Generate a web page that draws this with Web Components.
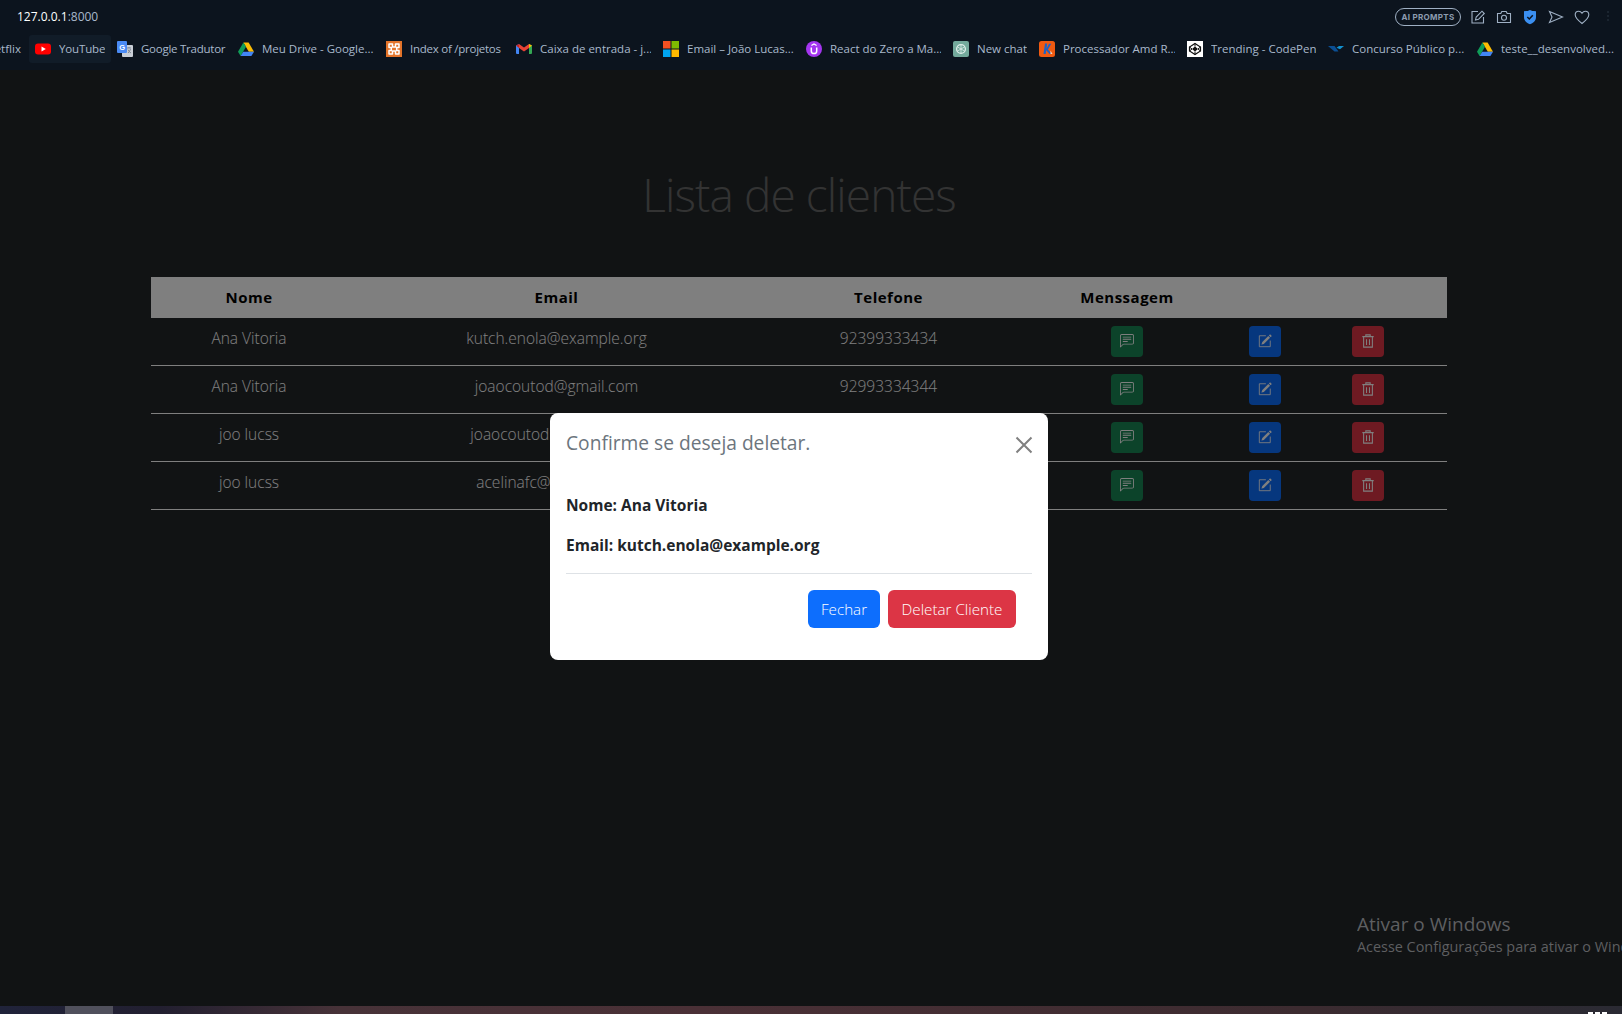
<!DOCTYPE html>
<html lang="pt-BR">
<head>
<meta charset="utf-8">
<title>Lista de clientes</title>
<style>
    html, body { margin: 0; height: 100%; background: #232629; overflow: hidden; }
    body { font-family: "Open Sans", "Noto Sans", sans-serif; }
</style>
</head>
<body>
<app-shell>
    <browser-bar slot="bar" address="127.0.0.1" port=":8000">
        <bookmark-link icon="none" w="37" label="Netflix"></bookmark-link>
        <bookmark-link icon="youtube" w="46" ls="-.15" label="YouTube" active></bookmark-link>
        <bookmark-link icon="translate" w="85" ls="-.25" label="Google Tradutor"></bookmark-link>
        <bookmark-link icon="drive" w="112" label="Meu Drive - Google..."></bookmark-link>
        <bookmark-link icon="xampp" w="94" ls="-.25" label="Index of /projetos"></bookmark-link>
        <bookmark-link icon="gmail" w="111" label="Caixa de entrada - j..."></bookmark-link>
        <bookmark-link icon="microsoft" w="107" label="Email – João Lucas..."></bookmark-link>
        <bookmark-link icon="udemy" w="111" label="React do Zero a Ma..."></bookmark-link>
        <bookmark-link icon="chatgpt" w="50" label="New chat"></bookmark-link>
        <bookmark-link icon="kabum" w="112" label="Processador Amd R..."></bookmark-link>
        <bookmark-link icon="codepen" w="105" label="Trending - CodePen"></bookmark-link>
        <bookmark-link icon="concurso" w="113" label="Concurso Público p..."></bookmark-link>
        <bookmark-link icon="drive" w="113" label="teste__desenvolved..."></bookmark-link>
    </browser-bar>

    <client-list heading="Lista de clientes">
        <client-row name="Ana Vitoria" email="kutch.enola@example.org" phone="92399333434"></client-row>
        <client-row name="Ana Vitoria" email="joaocoutod@gmail.com" phone="92993334344"></client-row>
        <client-row name="joo lucss" email="joaocoutod1@gmail.com" phone="92993334344"></client-row>
        <client-row name="joo lucss" email="acelinafc@hotmail.com" phone="92993334344"></client-row>
    </client-list>

    <confirm-modal heading="Confirme se deseja deletar.">
        <p>Nome: Ana Vitoria</p>
        <p>Email: kutch.enola@example.org</p>
    </confirm-modal>

    <activation-note></activation-note>
    <task-strip slot="strip"></task-strip>
</app-shell>

<script>
// favicons for the bookmarks row, all 16x16
const FAVICONS = {
    none: '',
    youtube: '<rect x="0" y="2.5" width="16" height="11" rx="3" fill="#f00"/><path d="M6.5 5.6 10.8 8l-4.3 2.4z" fill="#fff"/>',
    translate: '<rect x="5" y="4" width="11" height="12" rx="1" fill="#c9ced6"/><rect x="0" y="0" width="10" height="12" rx="1" fill="#4a8af4"/><text x="2.2" y="8.6" font-size="7.5" font-weight="700" font-family="Liberation Sans" fill="#fff">G</text><path d="M10 7h4M12 6v1M11 8.5c.6 1.6 1.6 2.8 3 3.5M13.5 8c-.4 1.6-1.2 3-2.5 4" stroke="#7f8691" fill="none"/>',
    drive: '<path d="M5.4 1.5h5.2L16 10.8h-5.2z" fill="#fbbc04"/><path d="M5.4 1.5 0 10.8l2.6 4.2L8 5.8z" fill="#0f9d58"/><path d="M5.2 10.8H16L13.4 15H2.6z" fill="#4285f4"/>',
    xampp: '<rect width="16" height="16" fill="#e4742a"/><path d="M3 3h3.5v3h3V3H13v3.6h-2.3v2.8H13V13H9.5v-3h-3v3H3V9.4h2.3V6.6H3z" fill="none" stroke="#fff" stroke-width="1.5" stroke-linejoin="round"/>',
    gmail: '<path d="M0 4.4 3 3v10H1a1 1 0 0 1-1-1z" fill="#4285f4"/><path d="M16 4.4 13 3v10h2a1 1 0 0 0 1-1z" fill="#34a853"/><path d="M3 3v4l5 3.6L13 7V3L8 6.6z" fill="#ea4335"/><path d="M0 4.4 3 7V3z" fill="#c5221f"/><path d="M16 4.4 13 7V3z" fill="#fbbc04"/>',
    microsoft: '<rect width="7.5" height="7.5" fill="#f25022"/><rect x="8.5" width="7.5" height="7.5" fill="#7fba00"/><rect y="8.5" width="7.5" height="7.5" fill="#00a4ef"/><rect x="8.5" y="8.5" width="7.5" height="7.5" fill="#ffb900"/>',
    udemy: '<circle cx="8" cy="8" r="8" fill="#a435f0"/><path d="M5.3 6.5v3.4a2.7 2.7 0 0 0 5.4 0V6.5" fill="none" stroke="#fff" stroke-width="1.5"/><path d="M5.4 4.6 8 3l2.6 1.6" fill="none" stroke="#fff" stroke-width="1.2"/>',
    chatgpt: '<rect width="16" height="16" rx="2" fill="#74aa9c"/><circle cx="8" cy="8" r="4.4" fill="none" stroke="#dfeeea" stroke-width="1.3"/><path d="M8 3.6v8.8M4.2 5.8l7.6 4.4M4.2 10.2l7.6-4.4" stroke="#dfeeea" stroke-width=".8"/>',
    kabum: '<rect width="16" height="16" rx="2.5" fill="#f05a11"/><path d="M6 2.5 4.5 13h2.2l.5-3.8L10.5 13h2.4L9 8.6l3.2-5.8h-2.2L7.6 7.4 8.2 2.5z" fill="#1e62c4"/><path d="M11.500 9.500 13.500 13h-2z" fill="#ffd9b8"/>',
    codepen: '<rect width="16" height="16" fill="#fff"/><path d="M8 2.5 13.5 6v4L8 13.5 2.5 10V6z" fill="none" stroke="#111" stroke-width="1.2"/><path d="M8 5.5 11 8l-3 2.5L5 8z" fill="#111"/><path d="M8 2.5v3M8 10.5v3M2.5 6 5 8l-2.5 2M13.5 6 11 8l2.5 2" fill="none" stroke="#111"/>',
    concurso: '<path d="M0 5h6.5l4 5.5H6.5z" fill="#0b4f94"/><path d="M8.5 6.8 11 5h5l-4 3.2z" fill="#1291d0"/>'
};

class AppShell extends HTMLElement {
    constructor() {
        super();
        const shadow = this.attachShadow({ mode: 'open' });
        shadow.innerHTML = `
            <style>
                :host {
                    display: flex;
                    flex-direction: column;
                    height: 100vh;
                    overflow: hidden;
                    color: #fff;
                }
                main {
                    position: relative;
                    flex: 1;
                    min-height: 0;
                }
            </style>
            <slot name="bar"></slot>
            <main><slot></slot></main>
            <slot name="strip"></slot>
        `;
    }
}

class BrowserBar extends HTMLElement {
    constructor() {
        super();
        const shadow = this.attachShadow({ mode: 'open' });
        shadow.innerHTML = `
            <style>
                :host {
                    display: block;
                    height: 70px;
                    background: #0c141e;
                    overflow: hidden;
                    font-family: "Open Sans", "Noto Sans", sans-serif;
                }
                .top {
                    display: flex;
                    align-items: center;
                    height: 33px;
                    padding-left: 17px;
                    font-size: 12px;
                    color: #a9b9cc;
                }
                .top b { font-weight: 400; color: #fff; }
                .tools {
                    display: flex;
                    align-items: center;
                    margin-left: auto;
                    margin-right: -30px;
                    color: #9fb0c4;
                }
                .pill {
                    box-sizing: border-box;
                    width: 66px;
                    height: 18px;
                    border: 1px solid #9fb0c4;
                    border-radius: 9px;
                    color: #8d9cb0;
                    font: 700 8px/16px Inter, sans-serif;
                    letter-spacing: .3px;
                    text-align: center;
                    margin-right: 9px;
                }
                svg { display: block; flex: none; width: 16px; height: 16px; margin-right: 10px; fill: none; stroke: currentColor; stroke-width: 1.1; }
                .marks {
                    display: flex;
                    margin: 2px 0 0 -44px;
                }
            </style>
            <div class="top">
                <span><b>${this.getAttribute('address')}</b>${this.getAttribute('port')}</span>
                <div class="tools">
                    <span class="pill">AI PROMPTS</span>
                    <svg viewBox="0 0 16 16"><path d="M8 2.5H2v11.5h11.5V8"/><path d="m5.5 11 .7-3L12 2.2l2.3 2.3L8.5 10.300z"/></svg>
                    <svg viewBox="0 0 16 16"><path d="M1.500 4.500h3.300l1-2h4.400l1 2h3.300v9h-13z"/><circle cx="8" cy="8.800" r="2.500"/></svg>
                    <svg viewBox="0 0 16 16" style="stroke:none"><path d="M2 2.200C5 2.200 6.500 1.800 8 1c1.500.8 3 1.200 6 1.200v6C14 12 11 14 8 15.300 5 14 2 12 2 8.200z" fill="#3b8ff0"/><path d="m5.300 8 2 2 3.500-3.800" stroke="#0c141e" stroke-width="1.500" fill="none"/></svg>
                    <svg viewBox="0 0 16 16"><path d="m1.500 2.500 13 5.500-13 5.500 2.500-5.500z"/></svg>
                    <svg viewBox="0 0 16 16"><path d="M8 14.500C3.500 11 1.200 8.600 1.200 5.800 1.200 3.600 2.900 2.200 4.700 2.200c1.400 0 2.500.8 3.300 2 .8-1.200 1.900-2 3.300-2 1.800 0 3.500 1.400 3.500 3.600 0 2.800-2.300 5.200-6.800 8.700z"/></svg>
                    <svg viewBox="0 0 16 16" style="stroke:#26313d;stroke-dasharray:2 2;stroke-width:1.200"><path d="M8 2v12"/></svg>
                    <svg viewBox="0 0 16 16"><path d="M8 1.500 14 4.500v7L8 14.500 2 11.500v-7zM2 4.500l6 3 6-3M8 7.500v7"/></svg>
                </div>
            </div>
            <div class="marks"><slot></slot></div>
        `;
    }
}

class BookmarkLink extends HTMLElement {
    constructor() {
        super();
        const shadow = this.attachShadow({ mode: 'open' });
        const icon = FAVICONS[this.getAttribute('icon')] || '';
        shadow.innerHTML = `
            <style>
                :host {
                    display: flex;
                    flex: none;
                    align-items: center;
                    gap: 8px;
                    box-sizing: border-box;
                    height: 28px;
                    padding: 0 6px;
                    border-radius: 3px;
                    font-size: 11.500px;
                    letter-spacing: ${this.getAttribute('ls') || 0}px;
                    color: #a9b9cc;
                    white-space: nowrap;
                }
                :host([active]) { background: #111c28; }
                svg { display: block; flex: none; width: 16px; height: 16px; }
                span { display: block; width: ${this.getAttribute('w')}px; overflow: hidden; margin-top: -2px; }
            </style>
            <svg viewBox="0 0 16 16">${icon}</svg>
            <span>${this.getAttribute('label')}</span>
        `;
    }
}

class ClientList extends HTMLElement {
    constructor() {
        super();
        const shadow = this.attachShadow({ mode: 'open' });
        shadow.innerHTML = `
            <style>
                :host {
                    display: block;
                    padding: 95px 175px 0 151px;
                    --cols: 196px 419px 245px 232px 44px 160px;
                }
                h1 {
                    margin: 0 0 54px;
                    font-size: 46px;
                    line-height: 58px;
                    font-weight: 300;
                    letter-spacing: -.9px;
                    color: #666;
                    text-align: center;
                }
                .head {
                    display: grid;
                    grid-template-columns: var(--cols);
                    box-sizing: border-box;
                    height: 41px;
                    padding-bottom: 2px;
                    align-items: center;
                    text-align: center;
                    background: #fff;
                    color: #000;
                    font-size: 15px;
                    font-weight: 700;
                    letter-spacing: .5px;
                }
            </style>
            <h1>${this.getAttribute('heading')}</h1>
            <div class="head">
                <span>Nome</span><span>Email</span><span>Telefone</span><span>Menssagem</span><span></span><span></span>
            </div>
            <slot></slot>
        `;
    }
}

class ClientRow extends HTMLElement {
    constructor() {
        super();
        const shadow = this.attachShadow({ mode: 'open' });
        shadow.innerHTML = `
            <style>
                :host {
                    display: grid;
                    grid-template-columns: var(--cols);
                    box-sizing: border-box;
                    height: 48px;
                    padding-top: 8px;
                    border-bottom: 1px solid #fff;
                    text-align: center;
                    color: #fff;
                    font-size: 15.500px;
                    font-weight: 300;
                    line-height: 24px;
                }
                .last { padding-left: 2px; }
            </style>
            <span>${this.getAttribute('name')}</span>
            <span>${this.getAttribute('email')}</span>
            <span>${this.getAttribute('phone')}</span>
            <div><action-button kind="chat"></action-button></div>
            <div><action-button kind="edit"></action-button></div>
            <div class="last"><action-button kind="trash"></action-button></div>
        `;
    }
}

const ACTIONS = {
    chat: {
        color: '#198754',
        svg: '<path d="M14 1a1 1 0 0 1 1 1v8a1 1 0 0 1-1 1H4.414A2 2 0 0 0 3 11.586l-2 2V2a1 1 0 0 1 1-1h12zM2 0a2 2 0 0 0-2 2v12.793a.5.5 0 0 0 .854.353l2.853-2.853A1 1 0 0 1 4.414 12H14a2 2 0 0 0 2-2V2a2 2 0 0 0-2-2H2z"/><path d="M3 3.500a.5.5 0 0 1 .5-.5h9a.5.5 0 0 1 0 1h-9a.5.5 0 0 1-.5-.5zM3 6a.5.5 0 0 1 .5-.5h9a.5.5 0 0 1 0 1h-9A.5.5 0 0 1 3 6zm0 2.500a.5.5 0 0 1 .5-.5h5a.5.5 0 0 1 0 1h-5a.5.5 0 0 1-.5-.5z"/>'
    },
    edit: {
        color: '#0d6efd',
        svg: '<path d="M15.502 1.940a.5.5 0 0 1 0 .706L14.459 3.690l-2-2L13.502.646a.5.5 0 0 1 .707 0l1.293 1.293zm-1.750 2.456-2-2L4.939 9.210a.5.5 0 0 0-.121.196l-.805 2.414a.25.25 0 0 0 .316.316l2.414-.805a.5.5 0 0 0 .196-.12l6.813-6.814z"/><path d="M9 2H1.500v12.500H14V7.500" fill="none" stroke="currentColor"/>'
    },
    trash: {
        color: '#dc3545',
        svg: '<path d="M1.500 3h13M5.500 3V1h5v2M3 3.500v11.500h10V3.500M6.300 6v6.500M9.700 6v6.500" fill="none" stroke="currentColor" stroke-width="1.200"/>'
    }
};

class ActionButton extends HTMLElement {
    constructor() {
        super();
        const shadow = this.attachShadow({ mode: 'open' });
        const action = ACTIONS[this.getAttribute('kind')];
        shadow.innerHTML = `
            <style>
                :host {
                    display: inline-flex;
                    justify-content: center;
                    box-sizing: border-box;
                    width: 32px;
                    height: 31px;
                    padding-top: 8px;
                    border-radius: 4px;
                    background: ${action.color};
                    color: #fff;
                    vertical-align: top;
                }
                svg { display: block; width: 14px; height: 14px; fill: currentColor; }
            </style>
            <svg viewBox="0 0 16 16">${action.svg}</svg>
        `;
    }
}

class ConfirmModal extends HTMLElement {
    constructor() {
        super();
        const shadow = this.attachShadow({ mode: 'open' });
        shadow.innerHTML = `
            <style>
                :host {
                    position: absolute;
                    inset: 0;
                    display: flex;
                    justify-content: center;
                    padding: 343px 24px 0 0;
                    background: rgba(0, 0, 0, .5);
                }
                .dialog {
                    box-sizing: border-box;
                    width: 498px;
                    height: 247px;
                    padding: 16px;
                    border-radius: 8px;
                    background: #fff;
                    color: #212529;
                    font-size: 16px;
                    line-height: 24px;
                }
                header {
                    display: flex;
                    justify-content: space-between;
                    height: 64px;
                }
                h5 {
                    margin: 0;
                    font-size: 19.200px;
                    font-weight: 400;
                    line-height: 28px;
                    color: #6c757d;
                }
                header svg { display: block; width: 18px; height: 18px; margin: 7px -1px 0 0; stroke: #808080; stroke-width: 2; }
                ::slotted(p) {
                    margin: 0 0 16px;
                    font-size: 15.500px;
                    font-weight: 700;
                }
                footer {
                    display: flex;
                    justify-content: flex-end;
                    gap: 8px;
                    padding: 16px 16px 0;
                    border-top: 1px solid #dee2e6;
                }
                button {
                    height: 38px;
                    padding: 0;
                    border: 0;
                    border-radius: 6px;
                    color: #fff;
                    font: 300 15.200px "Open Sans", "Noto Sans", sans-serif;
                }
                .close { width: 72px; background: #0d6efd; }
                .remove { width: 128px; background: #dc3545; }
            </style>
            <div class="dialog">
                <header>
                    <h5>${this.getAttribute('heading')}</h5>
                    <svg viewBox="0 0 18 18"><path d="M1.500 1.500l15 15M16.500 1.500l-15 15"/></svg>
                </header>
                <slot></slot>
                <footer>
                    <button class="close">Fechar</button>
                    <button class="remove">Deletar Cliente</button>
                </footer>
            </div>
        `;
    }
}

class ActivationNote extends HTMLElement {
    constructor() {
        super();
        const shadow = this.attachShadow({ mode: 'open' });
        shadow.innerHTML = `
            <style>
                :host {
                    position: absolute;
                    left: 1357px;
                    right: 0;
                    top: 841px;
                    overflow: hidden;
                    white-space: nowrap;
                    color: #5e5f61;
                }
                .big { font-size: 19px; line-height: 26px; }
                .small { font-size: 14.400px; line-height: 20px; }
            </style>
            <div class="big">Ativar o Windows</div>
            <div class="small">Acesse Configurações para ativar o Windows.</div>
        `;
    }
}

class TaskStrip extends HTMLElement {
    constructor() {
        super();
        const shadow = this.attachShadow({ mode: 'open' });
        shadow.innerHTML = `
            <style>
                :host {
                    display: flex;
                    flex: none;
                    height: 8px;
                    padding: 0 15px 0 65px;
                    background: linear-gradient(90deg, #20233a 0, #221f30 160px, #473238 340px, #4a3036 700px, #3c2b30 1300px, #2a2a33 1622px);
                    justify-content: space-between;
                    align-items: flex-end;
                }
                .open { width: 48px; height: 8px; background: #50505c; }
                .clock { display: flex; gap: 2px; }
                .clock i { width: 5px; height: 2px; background: #fff; }
            </style>
            <div class="open"></div>
            <div class="clock"><i></i><i></i><i></i></div>
        `;
    }
}

customElements.define('app-shell', AppShell);
customElements.define('browser-bar', BrowserBar);
customElements.define('bookmark-link', BookmarkLink);
customElements.define('client-list', ClientList);
customElements.define('client-row', ClientRow);
customElements.define('action-button', ActionButton);
customElements.define('confirm-modal', ConfirmModal);
customElements.define('activation-note', ActivationNote);
customElements.define('task-strip', TaskStrip);
</script>
</body>
</html>
